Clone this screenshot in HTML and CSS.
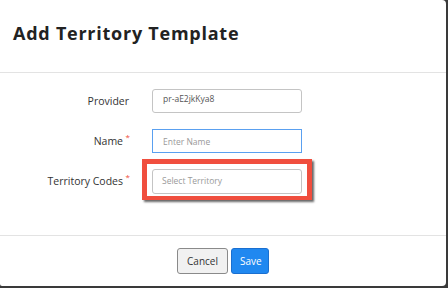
FILE: index.html
```html
<!DOCTYPE html>
<html>
<head>
<meta charset="utf-8">
<link rel="stylesheet" href="styles.css">
</head>
<body>
<div class="modal">
  <div class="header">
    <h1 class="title">Add Territory Template</h1>
  </div>
  <div class="body">
    <div class="row">
      <label class="label">Provider</label>
      <div class="field"><div class="input value">pr-aE2jkKya8</div></div>
    </div>
    <div class="row">
      <label class="label">Name<span class="req">*</span></label>
      <div class="field"><div class="input focus placeholder">Enter Name</div></div>
    </div>
    <div class="row">
      <label class="label">Territory Codes<span class="req">*</span></label>
      <div class="field highlight"><div class="input placeholder sel">Select Territory</div></div>
    </div>
  </div>
  <div class="footer">
    <button class="btn cancel">Cancel</button>
    <button class="btn save">Save</button>
  </div>
</div>
</body>
</html>
```
FILE: styles.css
```css
html, body {
  margin: 0;
  padding: 0;
}
body {
  width: 448px;
  height: 288px;
  background: #3a3a3a;
  font-family: "Open Sans", "Liberation Sans", sans-serif;
  overflow: hidden;
}
.modal {
  width: 446px;
  height: 286px;
  background: #fff;
  border-radius: 0 4px 4px 2px;
  display: flex;
  flex-direction: column;
}
.header {
  height: 73px;
  border-bottom: 1px solid #e3e3e3;
  display: flex;
  align-items: center;
  padding-left: 13px;
  box-sizing: border-box;
}
.title {
  margin: 0;
  font-size: 18px;
  font-weight: 700;
  color: #222;
  letter-spacing: 0.75px;
  padding-bottom: 6px;
}
.body {
  height: 163px;
  padding-top: 16px;
  box-sizing: border-box;
  border-bottom: 1px solid #e3e3e3;
  display: flex;
  flex-direction: column;
  gap: 16px;
}
.row {
  display: flex;
  align-items: center;
  height: 24px;
}
.label {
  width: 131px;
  text-align: right;
  font-size: 10.5px;
  color: #333;
  box-sizing: border-box;
  position: relative;
  padding-right: 8px;
}
.row:first-child .label {
  padding-right: 2px;
}
.req {
  color: #f04e3e;
  font-size: 8px;
  position: absolute;
  right: 1px;
  top: -3px;
}
.field {
  margin-left: 21px;
}
.input {
  width: 150px;
  height: 24px;
  box-sizing: border-box;
  border: 1px solid #c4c4c4;
  border-radius: 3px;
  font-size: 8.5px;
  padding: 4px 0 0 10px;
  color: #555;
}
.input.focus {
  border-color: #5aa0f0;
  border-radius: 0;
  padding-top: 6px;
}
.placeholder {
  color: #9a9a9a;
}
.value {
  padding-top: 3px;
}
.sel {
  height: 25px;
  padding-top: 5px;
  padding-left: 9px;
}
.highlight {
  margin-left: 11px;
  margin-top: -4px;
  padding: 5px 5px 2px 5px;
  border: 5px solid #f04e3e;
  border-bottom-width: 4px;
  box-shadow: 2px 2px 2px rgba(0, 0, 0, 0.6);
}
.footer {
  flex: 1;
  display: flex;
  justify-content: center;
  align-items: flex-start;
  padding-top: 12px;
  gap: 3px;
}
.btn {
  height: 26px;
  font-family: inherit;
  font-size: 10px;
  border-radius: 3px;
  padding: 0 8px;
  cursor: pointer;
}
.cancel {
  width: 51px;
  background: #f1f1f1;
  border: 1px solid #8a8a8a;
  color: #333;
}
.save {
  width: 38px;
  background: #2088f0;
  border: 1px solid #1a6fd0;
  color: #fff;
}
```
